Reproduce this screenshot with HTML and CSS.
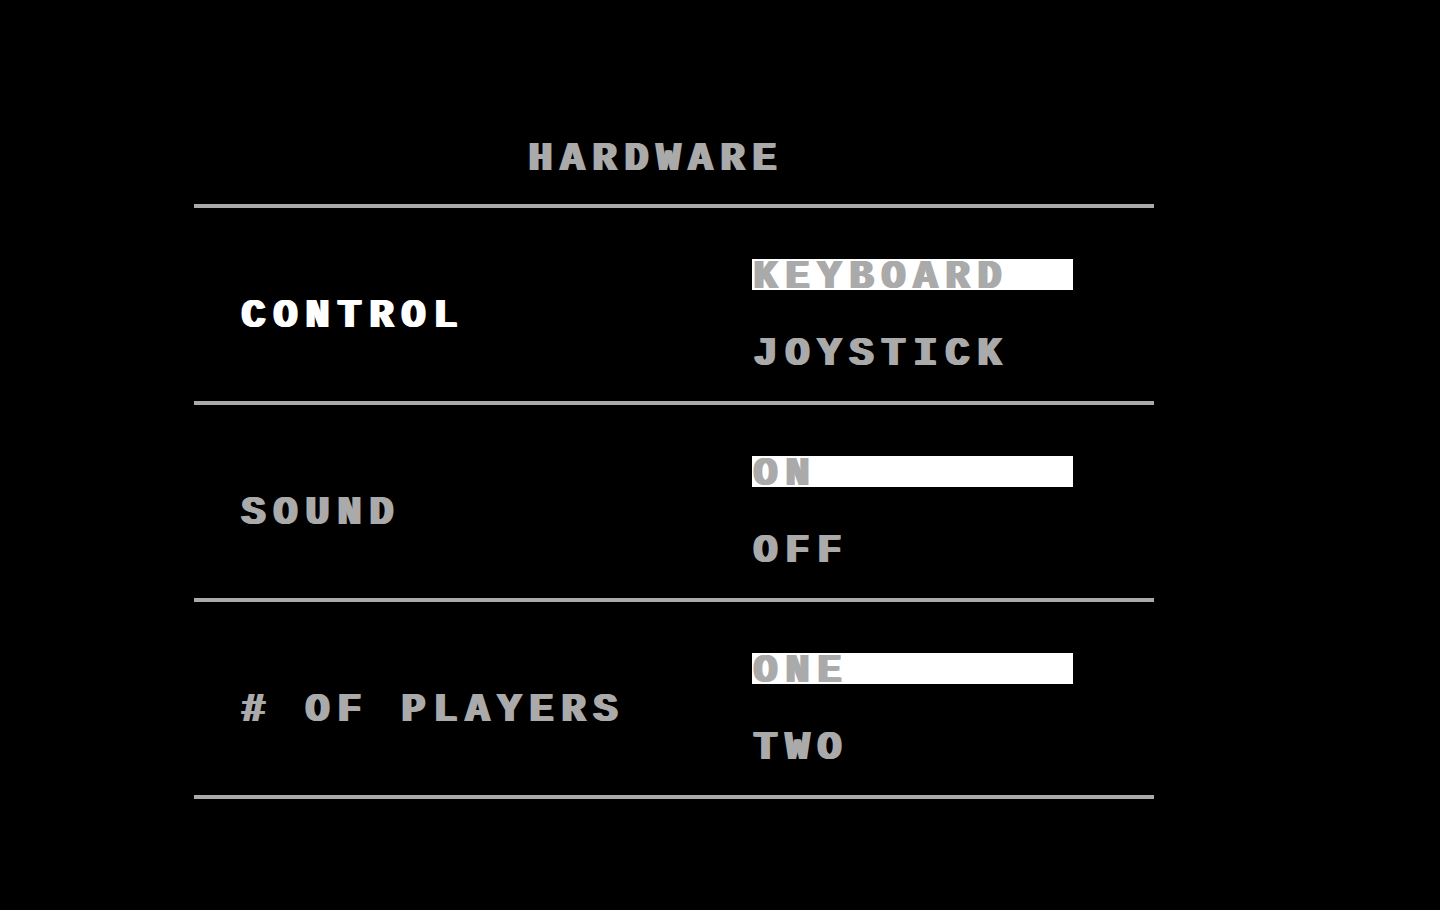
FILE: index.html
```html
<!DOCTYPE html>
<html lang="en">
  <head>
    <meta charset="UTF-8" />
    <title>Hardware Setup</title>
    <link rel="stylesheet" href="styles.css">
  </head>
  <body>
    <div class="screen">
      <div class="title">HARDWARE</div>
      <div class="menu">
        <div class="row">
          <div class="label active">CONTROL</div>
          <div class="options">
            <div class="option selected">KEYBOARD</div>
            <div class="option">JOYSTICK</div>
          </div>
        </div>
        <div class="row">
          <div class="label">SOUND</div>
          <div class="options">
            <div class="option selected">ON</div>
            <div class="option">OFF</div>
          </div>
        </div>
        <div class="row">
          <div class="label"># OF PLAYERS</div>
          <div class="options">
            <div class="option selected">ONE</div>
            <div class="option">TWO</div>
          </div>
        </div>
      </div>
    </div>
  </body>
</html>
```

FILE: styles.css
```css
* {
  box-sizing: border-box;
  margin: 0;
  padding: 0;
}
html,
body {
  background: #000;
  height: 100%;
}
body {
  font-family: "Liberation Mono", "DejaVu Sans Mono", monospace;
  font-weight: bold;
  font-size: 40px;
  letter-spacing: 8px;
  color: #aaa;
  /* thicken strokes like the doubled pixels of a text-mode font */
  text-shadow: 1px 0 0 currentColor, 2px 0 0 currentColor, 3px 0 0 currentColor;
}
.screen {
  width: 960px;
  margin-left: 194px;
  padding-top: 132px;
}
.title {
  padding-left: 333px;
  height: 72px;
  line-height: 55px;
}
.menu {
  border-top: 4px solid #aaa;
}
.row {
  display: grid;
  grid-template-columns: 512px 1fr;
  align-items: center;
  padding: 51px 0 34px 46px;
  border-bottom: 4px solid #aaa;
}
.label,
.option {
  height: 31px;
  line-height: 37px;
  white-space: pre;
}
.label.active {
  color: #fff;
}
.options {
  display: flex;
  flex-direction: column;
  gap: 46px;
}
.option.selected {
  width: 321px;
  background: #fff;
}
```
